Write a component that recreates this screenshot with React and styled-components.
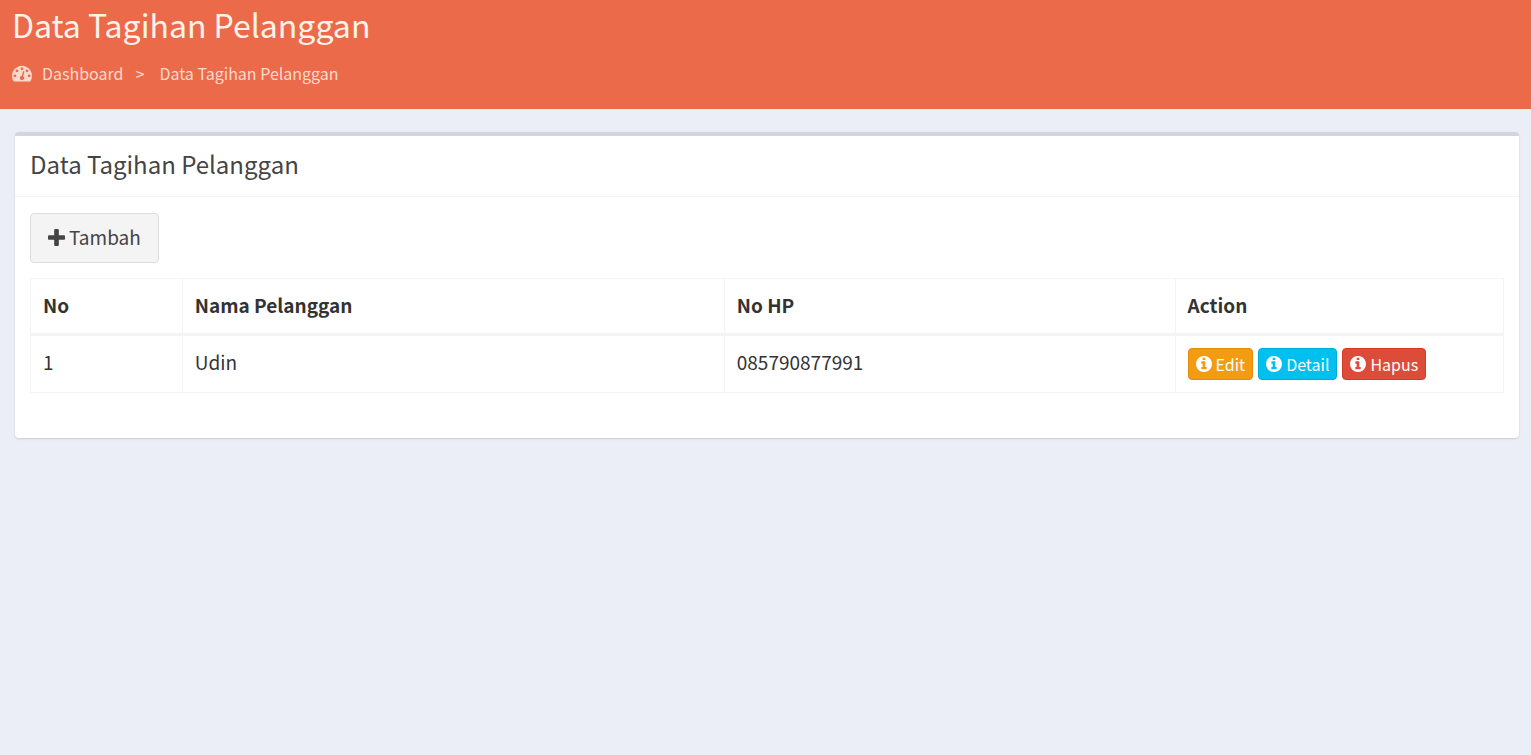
import React from 'react';
import styled, { createGlobalStyle } from 'styled-components';

const GlobalStyle = createGlobalStyle`
  *, *::before, *::after {
    box-sizing: border-box;
  }

  body {
    margin: 0;
    min-height: 100vh;
    background: #ebeef6;
    color: #333;
    font-family: "Noto Sans CJK SC", "Noto Sans", sans-serif;
    font-size: 19px;
    line-height: 28px;
  }

  a {
    color: inherit;
    text-decoration: none;
  }
`;

const Header = styled.header`
  padding: 2px 12px 22px;
  background: #eb6a4a;
  color: #fff3ea;
`;

const Title = styled.h1`
  margin: 0;
  font-size: 32px;
  font-weight: 400;
  line-height: 44px;
`;

const Breadcrumb = styled.ol`
  display: flex;
  align-items: center;
  margin: 13px 0 0;
  padding: 0;
  list-style: none;
  font-size: 16px;
  color: #fbdacd;
`;

const Crumb = styled.li`
  display: flex;
  align-items: center;

  & + &::before {
    content: '>';
    padding: 0 15px 0 12px;
  }

  a {
    display: flex;
    align-items: center;
    gap: 10px;
  }
`;

const Icon = styled.svg`
  width: ${({ $size }) => $size}px;
  height: ${({ $size }) => $size}px;
  flex: none;
  fill: currentColor;
`;

const Content = styled.main`
  padding: 23px 12px 24px 15px;
`;

const Box = styled.section`
  border-top: 4px solid #d2d6de;
  border-radius: 4px;
  background: #fff;
  box-shadow: 0 1px 2px rgba(0, 0, 0, 0.15);
`;

const BoxHeader = styled.div`
  padding: 13px 15px 17px;
  border-bottom: 1px solid #f4f4f4;
`;

const BoxTitle = styled.h2`
  margin: 0;
  font-size: 24px;
  font-weight: 400;
  line-height: 30px;
  color: #444;
`;

const BoxBody = styled.div`
  padding: 16px 15px 45px;
`;

const AddButton = styled.button`
  display: inline-flex;
  align-items: center;
  gap: 4px;
  height: 50px;
  padding: 0 17px 2px;
  border: 1px solid #ddd;
  border-radius: 4px;
  background: #f4f4f4;
  color: #444;
  font: inherit;
  cursor: pointer;
`;

const Table = styled.table`
  width: 100%;
  margin-top: 15px;
  border-collapse: collapse;
  table-layout: fixed;

  th,
  td {
    padding: 12px;
    border: 1px solid #f4f4f4;
    text-align: left;
    vertical-align: top;
  }

  th {
    padding-bottom: 14px;
    border-bottom-width: 3px;
    font-weight: 700;
  }
`;

const Column = styled.col`
  width: ${({ $width }) => $width}%;
`;

const Actions = styled.div`
  display: flex;
  flex-wrap: wrap;
  gap: 5px;
`;

const tones = {
  warning: { background: '#f39c12', border: '#e08e0b' },
  info: { background: '#00c0ef', border: '#00acd6' },
  danger: { background: '#dd4b39', border: '#d73925' },
};

const ActionButton = styled.button`
  display: inline-flex;
  align-items: center;
  gap: 4px;
  height: 32px;
  padding: 0 7px;
  border: 1px solid ${({ $tone }) => tones[$tone].border};
  border-radius: 4px;
  background: ${({ $tone }) => tones[$tone].background};
  color: #fff;
  font: inherit;
  font-size: 16px;
  cursor: pointer;
`;

const DashboardIcon = () => (
  <Icon $size={20} viewBox="0 0 1792 1792" aria-hidden="true">
    <path d="M384 1152q0-53-37.5-90.5t-90.5-37.5-90.5 37.5-37.5 90.5 37.5 90.5 90.5 37.5 90.5-37.5 37.5-90.5zm192-448q0-53-37.5-90.5t-90.5-37.5-90.5 37.5-37.5 90.5 37.5 90.5 90.5 37.5 90.5-37.5 37.5-90.5zm428 481l101-382q6-26-7.5-48.5t-38.5-29.5-48 6.5-30 39.5l-101 382q-60 5-107 43.5t-63 98.5q-20 77 20 146t117 89 146-20 89-117q16-60-6-117t-72-91zm660-33q0-53-37.5-90.5t-90.5-37.5-90.5 37.5-37.5 90.5 37.5 90.5 90.5 37.5 90.5-37.5 37.5-90.5zm-640-640q0-53-37.5-90.5t-90.5-37.5-90.5 37.5-37.5 90.5 37.5 90.5 90.5 37.5 90.5-37.5 37.5-90.5zm448 192q0-53-37.5-90.5t-90.5-37.5-90.5 37.5-37.5 90.5 37.5 90.5 90.5 37.5 90.5-37.5 37.5-90.5zm320 448q0 261-141 483-19 29-54 29h-1402q-35 0-54-29-141-221-141-483 0-182 71-348t191-286 286-191 348-71 348 71 286 191 191 286 71 348z" />
  </Icon>
);

const PlusIcon = () => (
  <Icon $size={17} viewBox="192 128 1408 1408" aria-hidden="true">
    <path d="M1600 736v192q0 40-28 68t-68 28h-416v416q0 40-28 68t-68 28h-192q-40 0-68-28t-28-68v-416h-416q-40 0-68-28t-28-68v-192q0-40 28-68t68-28h416v-416q0-40 28-68t68-28h192q40 0 68 28t28 68v416h416q40 0 68 28t28 68z" />
  </Icon>
);

const InfoIcon = () => (
  <Icon $size={16} viewBox="128 128 1536 1536" aria-hidden="true">
    <path d="M1152 1376v-160q0-14-9-23t-23-9h-96v-512q0-14-9-23t-23-9h-320q-14 0-23 9t-9 23v160q0 14 9 23t23 9h96v320h-96q-14 0-23 9t-9 23v160q0 14 9 23t23 9h448q14 0 23-9t9-23zm-128-896v-160q0-14-9-23t-23-9h-192q-14 0-23 9t-9 23v160q0 14 9 23t23 9h192q14 0 23-9t9-23zm640 416q0 209-103 385.5t-279.5 279.5-385.5 103-385.5-103-279.5-279.5-103-385.5 103-385.5 279.5-279.5 385.5-103 385.5 103 279.5 279.5 103 385.5z" />
  </Icon>
);

const columns = [
  { label: 'No', width: 10.3 },
  { label: 'Nama Pelanggan', width: 36.8 },
  { label: 'No HP', width: 30.6 },
  { label: 'Action', width: 22.3 },
];

const customers = [{ id: 1, name: 'Udin', phone: '085790877991' }];

const actions = [
  { label: 'Edit', tone: 'warning' },
  { label: 'Detail', tone: 'info' },
  { label: 'Hapus', tone: 'danger' },
];

function App() {
  return (
    <>
      <GlobalStyle />
      <Header>
        <Title>Data Tagihan Pelanggan</Title>
        <nav aria-label="Breadcrumb">
          <Breadcrumb>
            <Crumb>
              <a href="#dashboard"><DashboardIcon />Dashboard</a>
            </Crumb>
            <Crumb aria-current="page">Data Tagihan Pelanggan</Crumb>
          </Breadcrumb>
        </nav>
      </Header>
      <Content>
        <Box>
          <BoxHeader>
            <BoxTitle>Data Tagihan Pelanggan</BoxTitle>
          </BoxHeader>
          <BoxBody>
            <AddButton type="button"><PlusIcon />Tambah</AddButton>
            <Table>
              <colgroup>
                {columns.map(({ label, width }) => (
                  <Column key={label} $width={width} />
                ))}
              </colgroup>
              <thead>
                <tr>
                  {columns.map(({ label }) => (
                    <th key={label} scope="col">{label}</th>
                  ))}
                </tr>
              </thead>
              <tbody>
                {customers.map((customer, index) => (
                  <tr key={customer.id}>
                    <td>{index + 1}</td>
                    <td>{customer.name}</td>
                    <td>{customer.phone}</td>
                    <td>
                      <Actions>
                        {actions.map(({ label, tone }) => (
                          <ActionButton key={label} type="button" $tone={tone}>
                            <InfoIcon />{label}
                          </ActionButton>
                        ))}
                      </Actions>
                    </td>
                  </tr>
                ))}
              </tbody>
            </Table>
          </BoxBody>
        </Box>
      </Content>
    </>
  );
}

export default App;
